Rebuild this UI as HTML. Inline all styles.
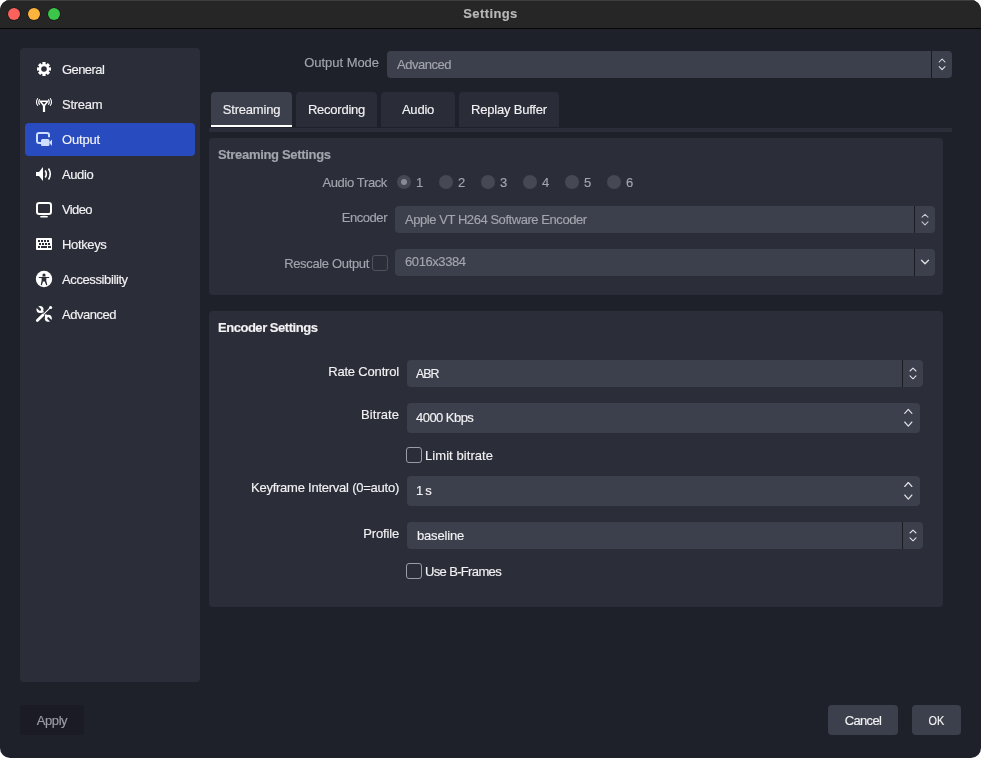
<!DOCTYPE html>
<html><head><meta charset="utf-8">
<style>
*{box-sizing:border-box;margin:0;padding:0}
html,body{width:981px;height:758px;background:#fff;overflow:hidden}
body{-webkit-text-stroke:0.15px currentColor;font-family:"Liberation Sans",sans-serif;font-size:13px;line-height:15px;color:#f2f2f4;position:relative}
#win{will-change:transform;position:absolute;left:0;top:0;width:981px;height:758px;background:#1f212a;border-radius:10px;overflow:hidden}
#tb{position:absolute;left:0;top:0;width:981px;height:29px;background:#262626;border-top:1px solid #3e3e3e;border-bottom:1px solid #060606}
#tb .t{position:absolute;left:0;right:0;top:5px;text-align:center;font-weight:bold;color:#b8b8b8;font-size:13px}
.dot{position:absolute;top:7px;width:12px;height:12px;border-radius:50%;box-shadow:0 0 0 0.6px rgba(0,0,0,.45)}
.abs{position:absolute;white-space:nowrap}
.panel{position:absolute;background:#2b2d38;border-radius:4px}
.it{position:absolute;left:62px;white-space:nowrap}
svg{position:absolute;overflow:visible}
.sel{position:absolute;left:25px;top:123px;width:170px;height:33px;background:#284cc0;border-radius:4px}
.lbl{position:absolute;white-space:nowrap;text-align:right}
.grey{color:#a3a5ad}
.combo{position:absolute;background:#3c3f4c;border-radius:4px}
.combo .sep{position:absolute;top:0;bottom:0;width:1px;background:#1b1c22}
.combo .v{position:absolute;white-space:nowrap}
.tab{position:absolute;top:92px;height:35px;padding-top:10px;background:#2a2c37;border-radius:4px 4px 0 0;text-align:center;white-space:nowrap}
.cb{position:absolute;width:16px;height:16px;border:1px solid #9a9ca6;border-radius:3px}
.radio{position:absolute;top:175px;width:14px;height:14px;border-radius:50%;background:#464853}
.btn{position:absolute;top:705px;height:30px;padding-top:8px;background:#3c3f4c;border-radius:4px;text-align:center;white-space:nowrap}
</style></head><body>
<div id="win">
  <div id="tb">
    <div class="dot" style="left:8px;background:#fb625c"></div>
    <div class="dot" style="left:28px;background:#fdb43c"></div>
    <div class="dot" style="left:48px;background:#3bc64a"></div>
    <div class="t" style="letter-spacing:0.4px">Settings</div>
  </div>

  <!-- sidebar -->
  <div class="panel" style="left:20px;top:48px;width:180px;height:634px"></div>
  <div class="sel"></div>
  <div class="it" style="top:62px;letter-spacing:-0.57px">General</div>
  <div class="it" style="top:97px;letter-spacing:-0.28px">Stream</div>
  <div class="it" style="top:132px;letter-spacing:-0.16px">Output</div>
  <div class="it" style="top:167px;letter-spacing:-0.4px">Audio</div>
  <div class="it" style="top:202px;letter-spacing:-0.62px">Video</div>
  <div class="it" style="top:237px;letter-spacing:-0.35px">Hotkeys</div>
  <div class="it" style="top:272px;letter-spacing:-0.39px">Accessibility</div>
  <div class="it" style="top:307px;letter-spacing:-0.46px">Advanced</div>

  <!-- icons -->
  <svg style="left:0;top:0" width="981" height="758" viewBox="0 0 981 758">
    <!-- gear -->
    <g transform="translate(44,69)" fill="#fff">
      <circle r="5.2"/>
      <rect x="-1.6" y="-7" width="3.2" height="14"/>
      <rect x="-7" y="-1.6" width="14" height="3.2"/>
      <rect x="-1.6" y="-7" width="3.2" height="14" transform="rotate(45)"/>
      <rect x="-1.6" y="-7" width="3.2" height="14" transform="rotate(-45)"/>
      <circle r="2.8" fill="#2b2d38"/>
    </g>
    <!-- antenna -->
    <g fill="none" stroke="#fff">
      <path d="M40.3 101.3 H47.7 L44 106 Z" stroke-width="1.6" stroke-linejoin="round"/>
      <path d="M44 105 V112" stroke-width="2.2"/>
      <path d="M39.6 99.2 Q37.8 102 39.6 104.8" stroke-width="1.1"/>
      <path d="M37.8 98.2 Q35.2 102 37.8 105.8" stroke-width="1.1"/>
      <path d="M48.4 99.2 Q50.2 102 48.4 104.8" stroke-width="1.1"/>
      <path d="M50.2 98.2 Q52.8 102 50.2 105.8" stroke-width="1.1"/>
    </g>
    <!-- output -->
    <g fill="#cfe0ff">
      <path d="M43.5 143 H39 Q37 143 37 141 V135 Q37 133 39 133 H47 Q49 133 49 135 V137.3" fill="none" stroke="#cfe0ff" stroke-width="2"/>
      <rect x="41" y="139" width="8.5" height="7" rx="1.5"/>
      <path d="M49 142.5 L52 139.5 V146 Z"/>
    </g>
    <!-- audio -->
    <g fill="#fff">
      <path d="M36 172 H39 L43 167 V181 L39 176 H36 Z"/>
      <path d="M45.2 170.5 Q47.5 174 45.2 177.5" fill="none" stroke="#fff" stroke-width="1.6"/>
      <path d="M48.5 168.5 Q52 174 48.5 179.5" fill="none" stroke="#fff" stroke-width="1.6"/>
    </g>
    <!-- video -->
    <g>
      <rect x="37" y="203" width="14" height="11" rx="2.2" fill="none" stroke="#fff" stroke-width="2"/>
      <ellipse cx="44" cy="216.7" rx="4" ry="0.9" fill="#fff"/>
    </g>
    <!-- keyboard -->
    <g>
      <rect x="36" y="238" width="16" height="12" rx="1" fill="#fff"/>
      <g fill="#2b2d38">
        <rect x="38" y="240" width="2" height="2"/><rect x="41" y="240" width="2" height="2"/><rect x="44" y="240" width="2" height="2"/><rect x="47" y="240" width="2" height="2"/>
        <rect x="39" y="243" width="2" height="2"/><rect x="42" y="243" width="2" height="2"/><rect x="45" y="243" width="2" height="2"/><rect x="48" y="243" width="2" height="2"/>
        <rect x="38" y="246" width="2" height="2"/><rect x="41" y="246" width="6" height="2"/><rect x="48" y="246" width="3" height="2"/>
      </g>
    </g>
    <!-- accessibility -->
    <g>
      <circle cx="44" cy="279" r="8.2" fill="#fff"/>
      <g fill="#2b2d38" stroke="#2b2d38">
        <circle cx="44" cy="275" r="1.6" stroke="none"/>
        <path d="M39.2 277.5 H48.8" stroke-width="1.1" stroke-linecap="round"/>
        <path d="M42.2 277.5 H45.8 L45.6 281 L46.6 284.5 M42.2 277.5 L42.4 281 L41.4 284.5" stroke-width="1.3" stroke-linecap="round" stroke-linejoin="round"/>
        <rect x="42.6" y="277.5" width="2.8" height="4" stroke="none"/>
      </g>
    </g>
    <!-- advanced -->
    <g>
      <path d="M40 309.6 L48.3 318.2" stroke="#fff" stroke-width="2.4"/>
      <circle cx="40" cy="309.6" r="3.5" fill="#fff"/>
      <circle cx="48.3" cy="318.2" r="3.5" fill="#fff"/>
      <path d="M40 309.6 L36.5 306.1" stroke="#2b2d38" stroke-width="2.2" stroke-linecap="round"/>
      <path d="M48.3 318.2 L51.8 321.7" stroke="#2b2d38" stroke-width="2.2" stroke-linecap="round"/>
      <path d="M37.3 320.6 L43 314.9" stroke="#2b2d38" stroke-width="4.4" stroke-linecap="round"/>
      <path d="M43 314.9 L49.8 308.1" stroke="#2b2d38" stroke-width="2.6"/>
      <path d="M37.3 320.6 L43 314.9" stroke="#fff" stroke-width="2.8" stroke-linecap="round"/>
      <path d="M43 314.9 L49.8 308.1" stroke="#fff" stroke-width="1.1"/>
      <circle cx="50.6" cy="307.5" r="1.6" fill="#fff"/>
    </g>
  </svg>

  <!-- output mode -->
  <div class="lbl grey" style="right:602px;top:55px;letter-spacing:-0.04px">Output Mode</div>
  <div class="combo" style="left:387px;top:51px;width:565px;height:27px">
    <div class="v grey" style="left:10px;top:6px;letter-spacing:-0.47px">Advanced</div>
    <div class="sep" style="left:544px"></div>
  </div>

  <!-- tabs -->
  <div class="abs" style="left:209px;top:128px;width:743px;height:4px;background:#2b2d38"></div>
  <div class="tab" style="left:211px;width:81px;background:#3c3f4c;letter-spacing:-0.2px">Streaming</div>
  <div class="abs" style="left:211px;top:125px;width:81px;height:2px;background:#fff"></div>
  <div class="tab" style="left:296px;width:81px;letter-spacing:-0.25px">Recording</div>
  <div class="tab" style="left:381px;width:74px;letter-spacing:-0.2px">Audio</div>
  <div class="tab" style="left:459px;width:100px;letter-spacing:-0.21px">Replay Buffer</div>

  <!-- streaming settings -->
  <div class="panel" style="left:209px;top:138px;width:734px;height:157px"></div>
  <div class="abs grey" style="left:218px;top:147px;font-weight:bold;letter-spacing:-0.32px">Streaming Settings</div>
  <div class="lbl grey" style="right:594px;top:175px;letter-spacing:-0.37px">Audio Track</div>
  <div class="radio" style="left:397px"><div style="position:absolute;left:4px;top:4px;width:6px;height:6px;border-radius:50%;background:#8a8c94"></div></div>
  <div class="abs grey" style="left:416px;top:175px">1</div>
  <div class="radio" style="left:439px"></div><div class="abs grey" style="left:458px;top:175px">2</div>
  <div class="radio" style="left:481px"></div><div class="abs grey" style="left:500px;top:175px">3</div>
  <div class="radio" style="left:523px"></div><div class="abs grey" style="left:542px;top:175px">4</div>
  <div class="radio" style="left:565px"></div><div class="abs grey" style="left:584px;top:175px">5</div>
  <div class="radio" style="left:607px"></div><div class="abs grey" style="left:626px;top:175px">6</div>

  <div class="lbl grey" style="right:594px;top:210px;letter-spacing:-0.47px">Encoder</div>
  <div class="combo" style="left:395px;top:206px;width:540px;height:27px">
    <div class="v grey" style="left:10px;top:6px;letter-spacing:-0.44px">Apple VT H264 Software Encoder</div>
    <div class="sep" style="left:519px"></div>
  </div>
  <div class="lbl grey" style="right:612px;top:256px;letter-spacing:-0.34px">Rescale Output</div>
  <div class="cb" style="left:372px;top:255px;border-color:#50525c"></div>
  <div class="combo" style="left:395px;top:249px;width:540px;height:27px">
    <div class="v grey" style="left:10px;top:5px;letter-spacing:-0.41px">6016x3384</div>
    <div class="sep" style="left:519px"></div>
  </div>

  <!-- encoder settings -->
  <div class="panel" style="left:209px;top:311px;width:734px;height:296px"></div>
  <div class="abs" style="left:218px;top:320px;font-weight:bold;letter-spacing:-0.47px">Encoder Settings</div>

  <div class="lbl" style="right:582px;top:364px;letter-spacing:-0.18px">Rate Control</div>
  <div class="combo" style="left:407px;top:360px;width:516px;height:27px">
    <div class="v" style="left:9px;top:6px;letter-spacing:-1px;transform:scaleX(0.95);transform-origin:0 0">ABR</div>
    <div class="sep" style="left:495px"></div>
  </div>
  <div class="lbl" style="right:582px;top:407px;letter-spacing:0.05px">Bitrate</div>
  <div class="combo" style="left:407px;top:403px;width:513px;height:30px">
    <div class="v" style="left:9px;top:7px;letter-spacing:-0.54px">4000 Kbps</div>
  </div>
  <div class="cb" style="left:406px;top:447px"></div>
  <div class="abs" style="left:425px;top:448px;letter-spacing:0.07px">Limit bitrate</div>
  <div class="lbl" style="right:582px;top:480px;letter-spacing:-0.24px">Keyframe Interval (0=auto)</div>
  <div class="combo" style="left:407px;top:476px;width:513px;height:30px">
    <div class="v" style="left:9px;top:7px;letter-spacing:-0.85px">1 s</div>
  </div>
  <div class="lbl" style="right:582px;top:526px;letter-spacing:-0.17px">Profile</div>
  <div class="combo" style="left:407px;top:522px;width:516px;height:27px">
    <div class="v" style="left:10px;top:6px;letter-spacing:-0.17px">baseline</div>
    <div class="sep" style="left:495px"></div>
  </div>
  <div class="cb" style="left:406px;top:563px"></div>
  <div class="abs" style="left:425px;top:564px;letter-spacing:-0.65px">Use B-Frames</div>

  <div class="btn" style="left:20px;width:64px;background:#1a1b24;color:#9c9ea6;letter-spacing:-0.42px">Apply</div>
  <div class="btn" style="left:828px;width:70px;letter-spacing:-0.7px">Cancel</div>
  <div class="btn" style="left:912px;width:49px"><span style="display:inline-block;transform:scaleX(0.84)">OK</span></div>
  <svg style="left:0;top:0" width="981" height="758" viewBox="0 0 981 758">
    <!-- combo chevrons -->
    <g fill="none" stroke="#e2e3e8" stroke-width="1.05" stroke-linecap="round" stroke-linejoin="round">
      <path d="M939.2 62 L942.1 59 L945 62 M939.2 66.7 L942.1 69.7 L945 66.7"/>
      <path d="M922 217.2 L925 214.3 L928 217.2 M922 221.8 L925 224.9 L928 221.8" stroke="#c8c9ce"/>
      <path d="M921.5 260.2 L925 263.7 L928.5 260.2" stroke-width="1.3"/>
      <path d="M910 371 L913 368.1 L916 371 M910 375.8 L913 378.8 L916 375.8"/>
      <path d="M904.7 413.4 L908.3 409.4 L911.9 413.4 M904.7 422 L908.3 426.1 L911.9 422" stroke-width="1.15"/>
      <path d="M904.7 486.5 L908.3 482.5 L911.9 486.5 M904.7 495 L908.3 499.1 L911.9 495" stroke-width="1.15"/>
      <path d="M910 533 L913 530.1 L916 533 M910 537.8 L913 540.8 L916 537.8"/>
    </g>
  </svg>
</div>
</body></html>
